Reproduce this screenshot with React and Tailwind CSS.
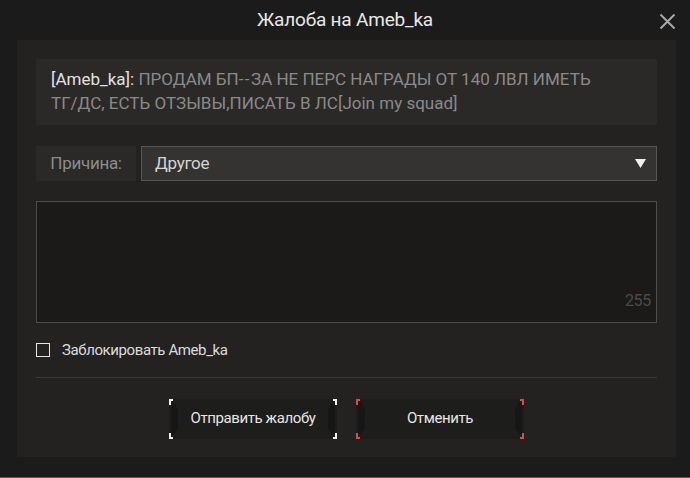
import React, { useState } from "react";

const font = { fontFamily: '"Roboto", "Liberation Sans", sans-serif' };

const Corners = ({ color }) => (
  <>
    <span className={`absolute left-0 top-0 h-[6px] w-[4px] border-l-2 border-t-2 ${color}`} />
    <span className={`absolute right-0 top-0 h-[6px] w-[4px] border-r-2 border-t-2 ${color}`} />
    <span className={`absolute left-0 bottom-0 h-[6px] w-[4px] border-l-2 border-b-2 ${color}`} />
    <span className={`absolute right-0 bottom-0 h-[6px] w-[4px] border-r-2 border-b-2 ${color}`} />
    <span className="absolute left-[2px] top-[4px] bottom-[4px] w-[7px] bg-[#161616] [clip-path:polygon(0_0,40%_0,100%_20%,100%_80%,40%_100%,0_100%)]" />
    <span className="absolute right-[2px] top-[4px] bottom-[4px] w-[7px] bg-[#161616] [clip-path:polygon(60%_0,100%_0,100%_100%,60%_100%,0_80%,0_20%)]" />
  </>
);

const GameButton = ({ children, color }) => (
  <button className="relative flex h-[40px] w-[168px] items-center justify-center bg-[#1d1d1c] text-[15px] tracking-[-0.4px] text-[#e6e6e6]">
    <Corners color={color} />
    <span className="relative">{children}</span>
  </button>
);

export default function App() {
  const [checked, setChecked] = useState(false);
  return (
    <div style={font} className="flex h-[478px] w-[690px] flex-col bg-[#1b1b1b] border-b border-[#5a5a5a]">
      {/* header */}
      <div className="relative flex h-[40px] items-center justify-center">
        <span className="text-[19px] tracking-[-0.2px] text-[#e8e8e8]">Жалоба на Ameb_ka</span>
        <button className="absolute right-[14px] top-[13px] text-[#a8a8a8]">
          <svg width="17" height="17" viewBox="0 0 17 17" fill="none" stroke="currentColor" strokeWidth="2">
            <path d="M1.5 1.5l14 14M15.5 1.5l-14 14" />
          </svg>
        </button>
      </div>

      <div className="ml-[17px] flex h-[417px] w-[659px] flex-col bg-[#232221] px-[19px] pt-[19px]">
        <div className="h-[66px] bg-[#2a2928] px-[15px] py-[8px] text-[17px] leading-[24px] text-[#8a8a8a]">
          <span className="text-[#e2e2e2]">[Ameb_ka]:</span> ПРОДАМ БП<span className="tracking-[1.5px]">--</span>ЗА НЕ ПЕРС НАГРАДЫ ОТ 140 ЛВЛ ИМЕТЬ
          <br />
          ТГ/ДС, ЕСТЬ ОТЗЫВЫ,ПИСАТЬ В ЛС[Join my squad]
        </div>

        <div className="mt-[21px] flex h-[35px] gap-[5px]">
          <div className="flex w-[100px] items-center justify-center bg-[#2a2928] text-[17px] tracking-[-0.3px] text-[#8c8c8c]">
            Причина:
          </div>
          <div className="flex flex-1 items-center justify-between border border-[#575655] bg-[#343331] pl-[13px] pr-[10px] text-[17px] tracking-[-0.3px] text-[#d6d6d6]">
            <span>Другое</span>
            <svg width="11" height="9" viewBox="0 0 11 9">
              <path d="M0 0h11L5.5 9z" fill="#f0f0f0" />
            </svg>
          </div>
        </div>

        <div className="relative mt-[20px] h-[122px] border border-[#4d4c4b] bg-[#1b1a19]">
          <span className="absolute bottom-[9px] right-[5px] text-[16px] tracking-[-0.3px] text-[#4a4a4a]">255</span>
        </div>

        <label className="mt-[16px] flex items-center gap-[12px] text-[15px] tracking-[-0.4px] text-[#dcdcdc]">
          <span
            onClick={() => setChecked(!checked)}
            className="h-[14px] w-[14px] border border-[#e6e6e6]"
          />
          Заблокировать Ameb_ka
        </label>

        <div className="mt-[15px] h-px bg-[#3a3938]" />

        <div className="mt-[21px] flex justify-center gap-[19px]">
          <GameButton color="border-[#f0f0f0]">Отправить жалобу</GameButton>
          <GameButton color="border-[#e04848]">Отменить</GameButton>
        </div>
      </div>
    </div>
  );
}
